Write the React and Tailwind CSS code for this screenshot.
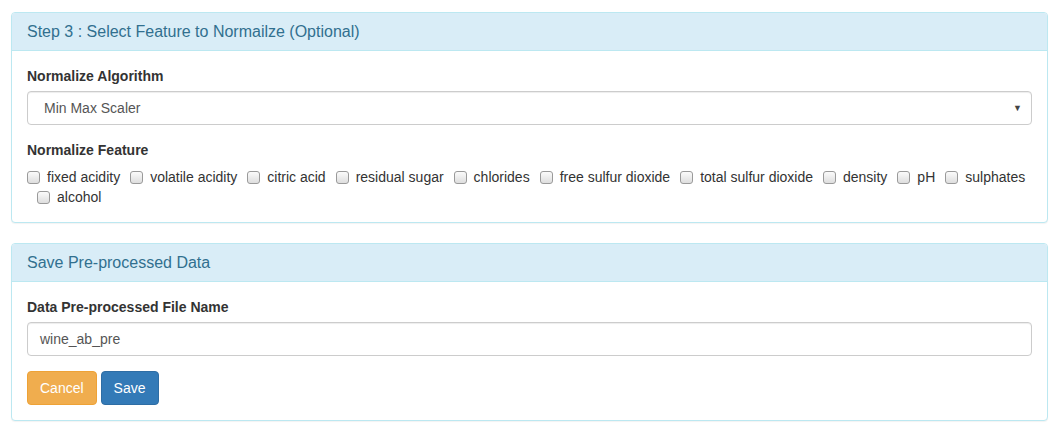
import React from 'react';

const features = [
  'fixed acidity',
  'volatile acidity',
  'citric acid',
  'residual sugar',
  'chlorides',
  'free sulfur dioxide',
  'total sulfur dioxide',
  'density',
  'pH',
  'sulphates',
  'alcohol',
];

function Panel({ title, children }) {
  return (
    <div className="mb-5 rounded-[4px] border border-[#bce8f1] bg-white shadow-[0_1px_1px_rgba(0,0,0,0.05)]">
      <div className="rounded-t-[3px] border-b border-[#bce8f1] bg-[#d9edf7] px-[15px] py-[10px] text-[16px] leading-[17px] text-[#31708f]">
        {title}
      </div>
      <div className="p-[15px]">{children}</div>
    </div>
  );
}

function Checkbox({ label, first }) {
  return (
    <label className={`relative inline-block pl-5 align-middle ${first ? '' : 'ml-[10px]'}`}>
      <span className="absolute left-0 top-[4px] h-[13px] w-[13px] rounded-[3px] border border-[#9a9a9a] bg-gradient-to-b from-[#fbfbfb] to-[#dedede]" />
      {label}
    </label>
  );
}

export default function App() {
  return (
    <div
      className="min-h-screen bg-white pl-[11px] pr-[15px] pt-[12px] text-[14px] leading-[20px] text-[#333]"
      style={{ fontFamily: '"Liberation Sans", Arial, sans-serif' }}
    >
      <Panel title="Step 3 : Select Feature to Normailze (Optional)">
        <div className="mb-[15px]">
          <div className="mb-[5px] font-bold">Normalize Algorithm</div>
          <div className="flex h-[34px] items-center justify-between rounded-[4px] border border-[#ccc] pl-[16px] pr-[9px] text-[#555] shadow-[inset_0_1px_1px_rgba(0,0,0,0.075)]">
            <span>Min Max Scaler</span>
            <span className="text-[9px] text-[#444]">▼</span>
          </div>
        </div>
        <div>
          <div className="mb-[5px] font-bold">Normalize Feature</div>
          <div className="flex flex-wrap pt-[2px]">
            {features.map((f, i) => (
              <Checkbox key={f} label={f} first={i === 0} />
            ))}
          </div>
        </div>
      </Panel>

      <Panel title="Save Pre-processed Data">
        <div className="mb-[15px]">
          <div className="mb-[5px] font-bold">Data Pre-processed File Name</div>
          <div className="flex h-[34px] items-center rounded-[4px] border border-[#ccc] px-[12px] text-[#555] shadow-[inset_0_1px_1px_rgba(0,0,0,0.075)]">
            wine_ab_pre
          </div>
        </div>
        <div className="flex gap-[4px]">
          <button className="h-[34px] rounded-[4px] border border-[#eea236] bg-[#f0ad4e] px-[12px] text-white">
            Cancel
          </button>
          <button className="h-[34px] rounded-[4px] border border-[#2e6da4] bg-[#337ab7] px-[12px] text-white">
            Save
          </button>
        </div>
      </Panel>
    </div>
  );
}
